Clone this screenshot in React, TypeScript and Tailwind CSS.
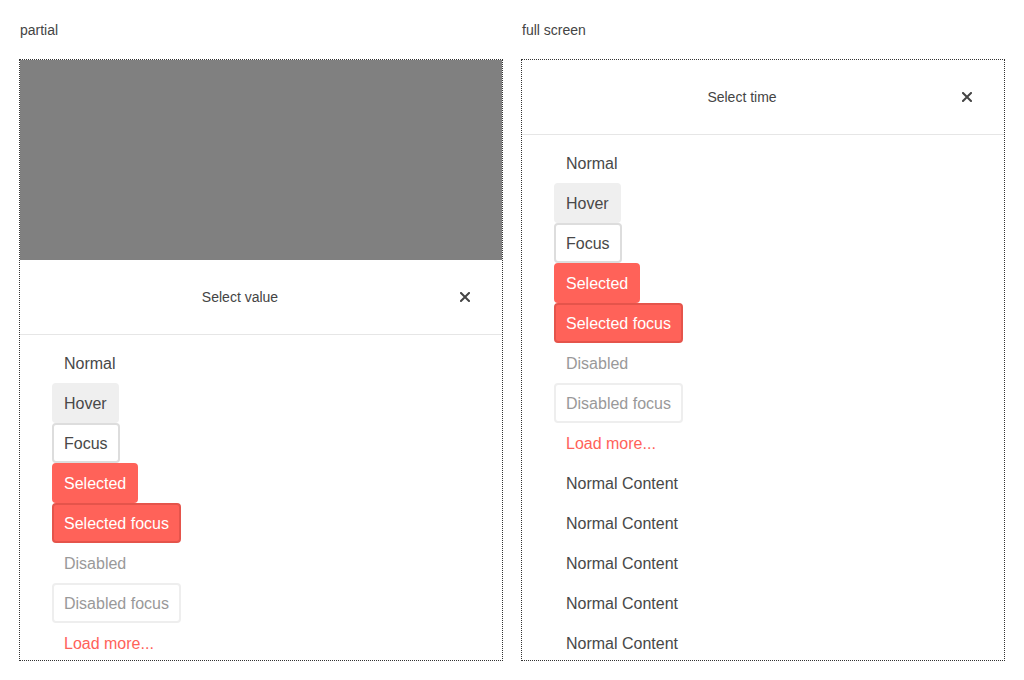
import React from 'react';

type Item = { label: string; kind: 'normal' | 'hover' | 'focus' | 'selected' | 'selectedFocus' | 'disabled' | 'disabledFocus' | 'more' };

const baseItems: Item[] = [
  { label: 'Normal', kind: 'normal' },
  { label: 'Hover', kind: 'hover' },
  { label: 'Focus', kind: 'focus' },
  { label: 'Selected', kind: 'selected' },
  { label: 'Selected focus', kind: 'selectedFocus' },
  { label: 'Disabled', kind: 'disabled' },
  { label: 'Disabled focus', kind: 'disabledFocus' },
  { label: 'Load more...', kind: 'more' },
];

const contentItems: Item[] = Array.from({ length: 5 }, () => ({ label: 'Normal Content', kind: 'normal' as const }));

const kindClass: Record<Item['kind'], string> = {
  normal: 'text-[#484848] border-transparent',
  hover: 'text-[#484848] bg-[#efefef] border-[#efefef]',
  focus: 'text-[#484848] border-[#dddddd]',
  selected: 'text-white bg-[#ff6259] border-[#ff6259]',
  selectedFocus: 'text-white bg-[#ff6259] border-[#e5544b]',
  disabled: 'text-[#999999] border-transparent',
  disabledFocus: 'text-[#999999] border-[#eeeeee]',
  more: 'text-[#ff6259] border-transparent',
};

const CloseIcon = () => (
  <svg width="10" height="10" viewBox="0 0 10 10" className="block">
    <path d="M1 1 L9 9 M9 1 L1 9" stroke="#444444" strokeWidth="2" strokeLinecap="square" />
  </svg>
);

const Sheet = ({ title, items }: { title: string; items: Item[] }) => (
  <div className="flex flex-col bg-white">
    <div className="flex items-center h-[75px] shrink-0 border-b border-[#e6e6e6]">
      <div className="w-[440px] text-center text-sm text-[#444444]">{title}</div>
      <button className="w-[10px] h-[10px] flex items-center justify-center">
        <CloseIcon />
      </button>
    </div>
    <ul className="flex flex-col items-start pt-2 px-8">
      {items.map((item, i) => (
        <li
          key={i}
          className={`h-10 px-[10px] pt-[2px] flex items-center rounded border-2 text-base leading-5 ${kindClass[item.kind]}`}
        >
          {item.label}
        </li>
      ))}
    </ul>
  </div>
);

export default function App() {
  return (
    <div className="w-[1024px] h-[680px] p-5 bg-white flex gap-5 font-['Liberation_Sans',Arial,sans-serif]">
      <div className="flex flex-col w-[482px]">
        <div className="h-5 leading-5 text-sm text-[#444444]">partial</div>
        <div className="mt-5 h-[600px] overflow-hidden outline outline-1 outline-dotted outline-[#333333] flex flex-col">
          <div className="h-[200px] shrink-0 bg-[#808080]" />
          <Sheet title="Select value" items={baseItems} />
        </div>
      </div>
      <div className="flex flex-col w-[482px]">
        <div className="h-5 leading-5 text-sm text-[#444444]">full screen</div>
        <div className="mt-5 h-[600px] overflow-hidden outline outline-1 outline-dotted outline-[#333333] flex flex-col">
          <Sheet title="Select time" items={[...baseItems, ...contentItems]} />
        </div>
      </div>
    </div>
  );
}
